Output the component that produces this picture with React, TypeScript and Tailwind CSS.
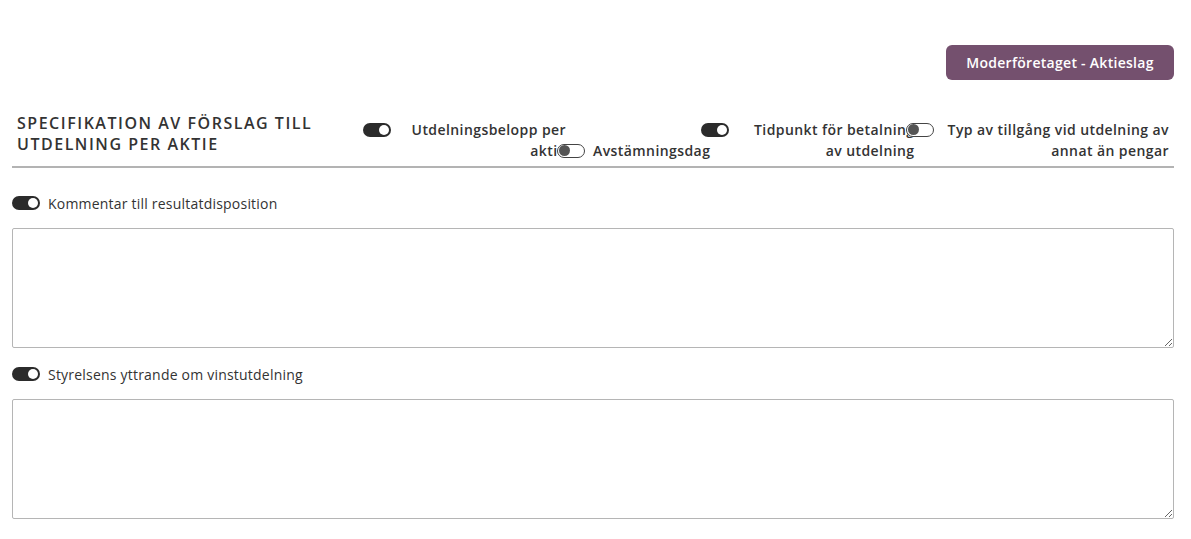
import type { ReactNode } from 'react'

// Resultatdisposition -- specification of proposed dividend per share

const FONT = { fontFamily: '"Open Sans", Lato, sans-serif' }

function Toggle({ on, className = '' }: { on: boolean; className?: string }) {
  if (on) {
    return (
      <span
        className={`relative z-10 inline-flex h-[14px] w-[28px] shrink-0 items-center justify-end rounded-full bg-[#2b2b2b] pr-[2px] ${className}`}
      >
        <span className="h-[10px] w-[10px] rounded-full bg-white" />
      </span>
    )
  }
  return (
    <span
      className={`relative z-10 inline-flex h-[14px] w-[28px] shrink-0 items-center rounded-full border border-[#444] bg-white pl-[1px] ${className}`}
    >
      <span className="h-[11px] w-[11px] rounded-full bg-[#555]" />
    </span>
  )
}

function TextSection({ label, children }: { label: string; children?: ReactNode }) {
  return (
    <div className="flex flex-col">
      <div className="flex h-[20px] items-center gap-2">
        <Toggle on />
        <span className="text-[14px] tracking-[0.015em] text-[#333]">{label}</span>
      </div>
      <textarea className="mt-[15px] h-[120px] w-full resize-y rounded-[2px] border border-[#b5b5b5] bg-white outline-none" />
      {children}
    </div>
  )
}

export default function App() {
  return (
    <div className="min-h-[539px] w-[1191px] bg-white pl-[12px] pr-[17px] pt-[45px] text-[#2e2e2e]" style={FONT}>
      {/* Company type button */}
      <div className="flex justify-end">
        <button className="h-[35px] w-[228px] rounded-[6px] bg-[#74506e] text-[14px] font-semibold tracking-[0.02em] text-white">
          Moderföretaget - Aktieslag
        </button>
      </div>

      {/* Table header */}
      <div className="mt-[32px] flex border-b-2 border-[#b3b3b3] pb-[5px] text-[14px] font-semibold leading-[21px] tracking-[0.03em] text-[#333]">
        <div className="w-[351px] shrink-0 pl-[5px] pt-[1px] text-[16px] font-semibold uppercase leading-[21px] tracking-[0.095em]">
          Specifikation av förslag till
          <br />
          utdelning per aktie
        </div>

        <div className="flex w-[203px] shrink-0 items-start pt-[7px]">
          <Toggle on className="mt-[3.5px]" />
          <div className="ml-[20px] w-[155px] whitespace-nowrap text-right">
            Utdelningsbelopp per
            <br />
            aktie
          </div>
        </div>

        <div className="-ml-[9px] flex w-[144px] shrink-0 items-start self-end">
          <Toggle on={false} className="mt-[3.5px]" />
          <div className="ml-[8px] whitespace-nowrap">Avstämningsdag</div>
        </div>

        <div className="flex w-[211px] shrink-0 items-start pt-[7px]">
          <Toggle on className="mt-[3.5px]" />
          <div className="ml-[25px] w-fit shrink-0 whitespace-nowrap text-right">
            Tidpunkt för betalning
            <br />
            av utdelning
          </div>
        </div>

        <div className="-ml-[6px] flex flex-1 items-start pr-[5px] pt-[7px]">
          <Toggle on={false} className="mt-[3.5px]" />
          <div className="ml-[13px] flex-1 whitespace-nowrap text-right">
            Typ av tillgång vid utdelning av
            <br />
            annat än pengar
          </div>
        </div>
      </div>

      {/* Free text sections */}
      <div className="mt-[25px] flex flex-col gap-[16px]">
        <TextSection label="Kommentar till resultatdisposition" />
        <TextSection label="Styrelsens yttrande om vinstutdelning" />
      </div>
    </div>
  )
}
